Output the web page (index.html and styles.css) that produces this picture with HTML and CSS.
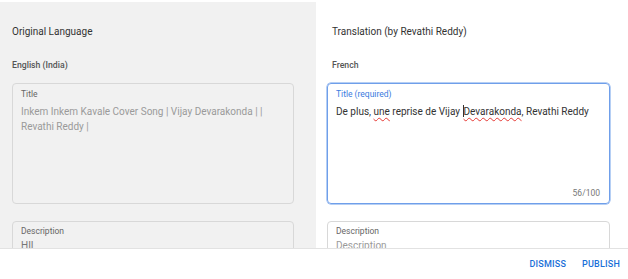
FILE: index.html
```html
<!DOCTYPE html>
<html lang="en">
  <head>
    <meta charset="UTF-8" />
    <meta name="viewport" content="width=device-width, initial-scale=1.0" />
    <title>Translation</title>
    <link rel="stylesheet" href="styles.css">
  </head>
  <body>
    <div class="editor">
      <div class="coluna original">
        <h2>Original Language</h2>
        <div class="idioma">English (India)</div>

        <div class="campo titulo">
          <div class="rotulo">Title</div>
          <div class="texto">Inkem Inkem Kavale Cover Song | Vijay Devarakonda | | Revathi Reddy |</div>
        </div>

        <div class="campo descricao">
          <div class="rotulo">Description</div>
          <div class="texto">HII</div>
        </div>
      </div>

      <div class="coluna traducao">
        <h2>Translation (by Revathi Reddy)</h2>
        <div class="idioma">French</div>

        <div class="campo titulo ativo">
          <div class="rotulo">Title (required)</div>
          <div class="texto">De plus, <span class="erro">une</span> reprise de Vijay <span class="cursor"></span><span class="erro">Devarakonda</span>, Revathi Reddy</div>
          <div class="contador">56/100</div>
        </div>

        <div class="campo descricao">
          <div class="rotulo">Description</div>
          <div class="texto vazio">Description</div>
        </div>
      </div>
    </div>

    <div class="rodape">
      <button class="botao">Dismiss</button>
      <button class="botao">Publish</button>
    </div>
  </body>
</html>
```

FILE: styles.css
```css
body {
  font-family: Roboto, "Noto Sans", Arial, sans-serif;
  background-color: #ffffff;
  margin: 0;
  padding: 0;
  color: #333333;
}

.editor {
  display: flex;
  height: 246px;
  margin-top: 2px;
  overflow: hidden;
}

.coluna {
  box-sizing: border-box;
  padding-top: 20px;
}

.original {
  width: 316px;
  background-color: #f1f1f1;
  padding-left: 12px;
  padding-right: 22px;
}

.traducao {
  flex: 1;
  padding-left: 11px;
  padding-right: 18px;
}

h2 {
  margin: 0;
  font-size: 10px;
  font-weight: 400;
  line-height: 20px;
  color: #333333;
}

.traducao h2,
.traducao .idioma {
  padding-left: 5px;
}

.idioma {
  margin-top: 15px;
  font-size: 8.7px;
  font-weight: 500;
  line-height: 16px;
  color: #555555;
}

.campo {
  position: relative;
  box-sizing: border-box;
  border: 1px solid #d8d8d8;
  border-radius: 4px;
  padding: 4px 8px;
}

.titulo {
  margin-top: 10px;
  height: 121px;
}

.descricao {
  margin-top: 17px;
  height: 60px;
}

.ativo {
  border: 1px solid #6f9fea;
  box-shadow: 0 0 0 0.5px #6f9fea;
}

.rotulo {
  font-size: 8.5px;
  line-height: 12px;
  color: #666666;
}

.ativo .rotulo {
  color: #3b7be0;
}

.texto {
  margin-top: 4px;
  font-size: 10px;
  line-height: 15px;
  color: #333333;
}

.descricao .rotulo {
  margin-top: -1px;
}

.descricao .texto {
  margin-top: 1px;
}

.original .texto {
  color: #9a9a9a;
}

.original .descricao .texto {
  color: #777777;
}

.texto.vazio {
  color: #9a9a9a;
}

.erro {
  text-decoration: underline wavy #e53935;
  text-decoration-thickness: 0.7px;
  text-underline-offset: 2px;
}

.cursor {
  display: inline-block;
  width: 1px;
  height: 12px;
  vertical-align: -2px;
  background-color: #333333;
}

.contador {
  position: absolute;
  right: 9px;
  bottom: 5px;
  font-size: 8.5px;
  color: #777777;
}

.rodape {
  display: flex;
  justify-content: flex-end;
  align-items: center;
  gap: 16px;
  height: 30px;
  padding-right: 8px;
  border-top: 1px solid #e2e2e2;
}

.rodape .botao {
  padding: 0;
  border: none;
  background: none;
  font-family: inherit;
  font-size: 9px;
  font-weight: 500;
  letter-spacing: 0.2px;
  text-transform: uppercase;
  color: #1a6fd8;
  cursor: pointer;
}
```
